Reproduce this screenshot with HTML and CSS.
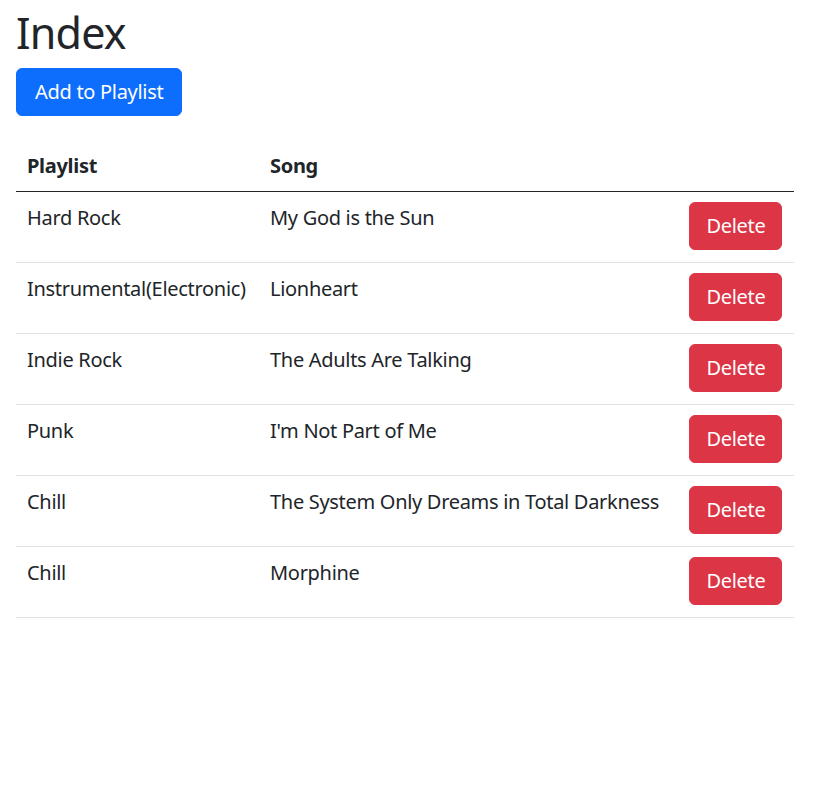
FILE: index.html
```html
<!DOCTYPE html>
<html lang="en">
<head>
<meta charset="utf-8">
<title>Index</title>
<link rel="stylesheet" href="styles.css">
</head>
<body>
<main class="container">
  <h1 class="title">Index</h1>
  <p class="actions"><a class="btn btn-primary" href="#">Add to Playlist</a></p>
  <table class="table">
    <colgroup>
      <col class="col-playlist">
      <col class="col-song">
      <col class="col-action">
    </colgroup>
    <thead>
      <tr><th>Playlist</th><th>Song</th><th></th></tr>
    </thead>
    <tbody>
      <tr><td>Hard Rock</td><td>My God is the Sun</td><td><button class="btn btn-danger">Delete</button></td></tr>
      <tr><td>Instrumental(Electronic)</td><td>Lionheart</td><td><button class="btn btn-danger">Delete</button></td></tr>
      <tr><td>Indie Rock</td><td>The Adults Are Talking</td><td><button class="btn btn-danger">Delete</button></td></tr>
      <tr><td>Punk</td><td>I'm Not Part of Me</td><td><button class="btn btn-danger">Delete</button></td></tr>
      <tr><td>Chill</td><td>The System Only Dreams in Total Darkness</td><td><button class="btn btn-danger">Delete</button></td></tr>
      <tr><td>Chill</td><td>Morphine</td><td><button class="btn btn-danger">Delete</button></td></tr>
    </tbody>
  </table>
</main>
</body>
</html>
```

FILE: styles.css
```css
* { box-sizing: border-box; }

html, body {
  margin: 0;
  background: #fff;
}

body {
  font-family: "Noto Sans", "Open Sans", sans-serif;
  font-size: 20px;
  line-height: 30px;
  letter-spacing: -0.3px;
  color: #212529;
}

.container {
  width: 778px;
  margin-left: 16px;
}

.title {
  font-size: 43px;
  font-weight: 400;
  line-height: 52px;
  letter-spacing: -0.8px;
  margin: 7px 0 9px;
}

.actions {
  margin: 0 0 25px;
  display: flex;
}

.btn {
  display: inline-flex;
  align-items: center;
  justify-content: center;
  height: 48px;
  padding: 0 18px;
  font-family: inherit;
  font-size: 20px;
  line-height: 30px;
  letter-spacing: -0.3px;
  color: #fff;
  text-decoration: none;
  border: 1px solid transparent;
  border-radius: 6px;
  cursor: pointer;
}

.btn-primary {
  background: #0d6efd;
  border-color: #0d6efd;
}

.btn-danger {
  background: #dc3545;
  border-color: #dc3545;
}

.table {
  width: 778px;
  border-collapse: collapse;
  table-layout: fixed;
}

.col-playlist { width: 243px; }
.col-song { width: 420px; }
.col-action { width: 115px; }

.table th {
  text-align: left;
  font-weight: 700;
  padding: 10px 11px;
  height: 50px;
  border-bottom: 1px solid #212529;
  vertical-align: top;
}

.table td {
  padding: 11px 11px 11px 11px;
  vertical-align: top;
  border-bottom: 1px solid #dee2e6;
  height: 71px;
  white-space: nowrap;
}

.table td .btn {
  padding: 0 0 0 1px;
  width: 93px;
  margin: -1px 0 0 -1px;
}
```
